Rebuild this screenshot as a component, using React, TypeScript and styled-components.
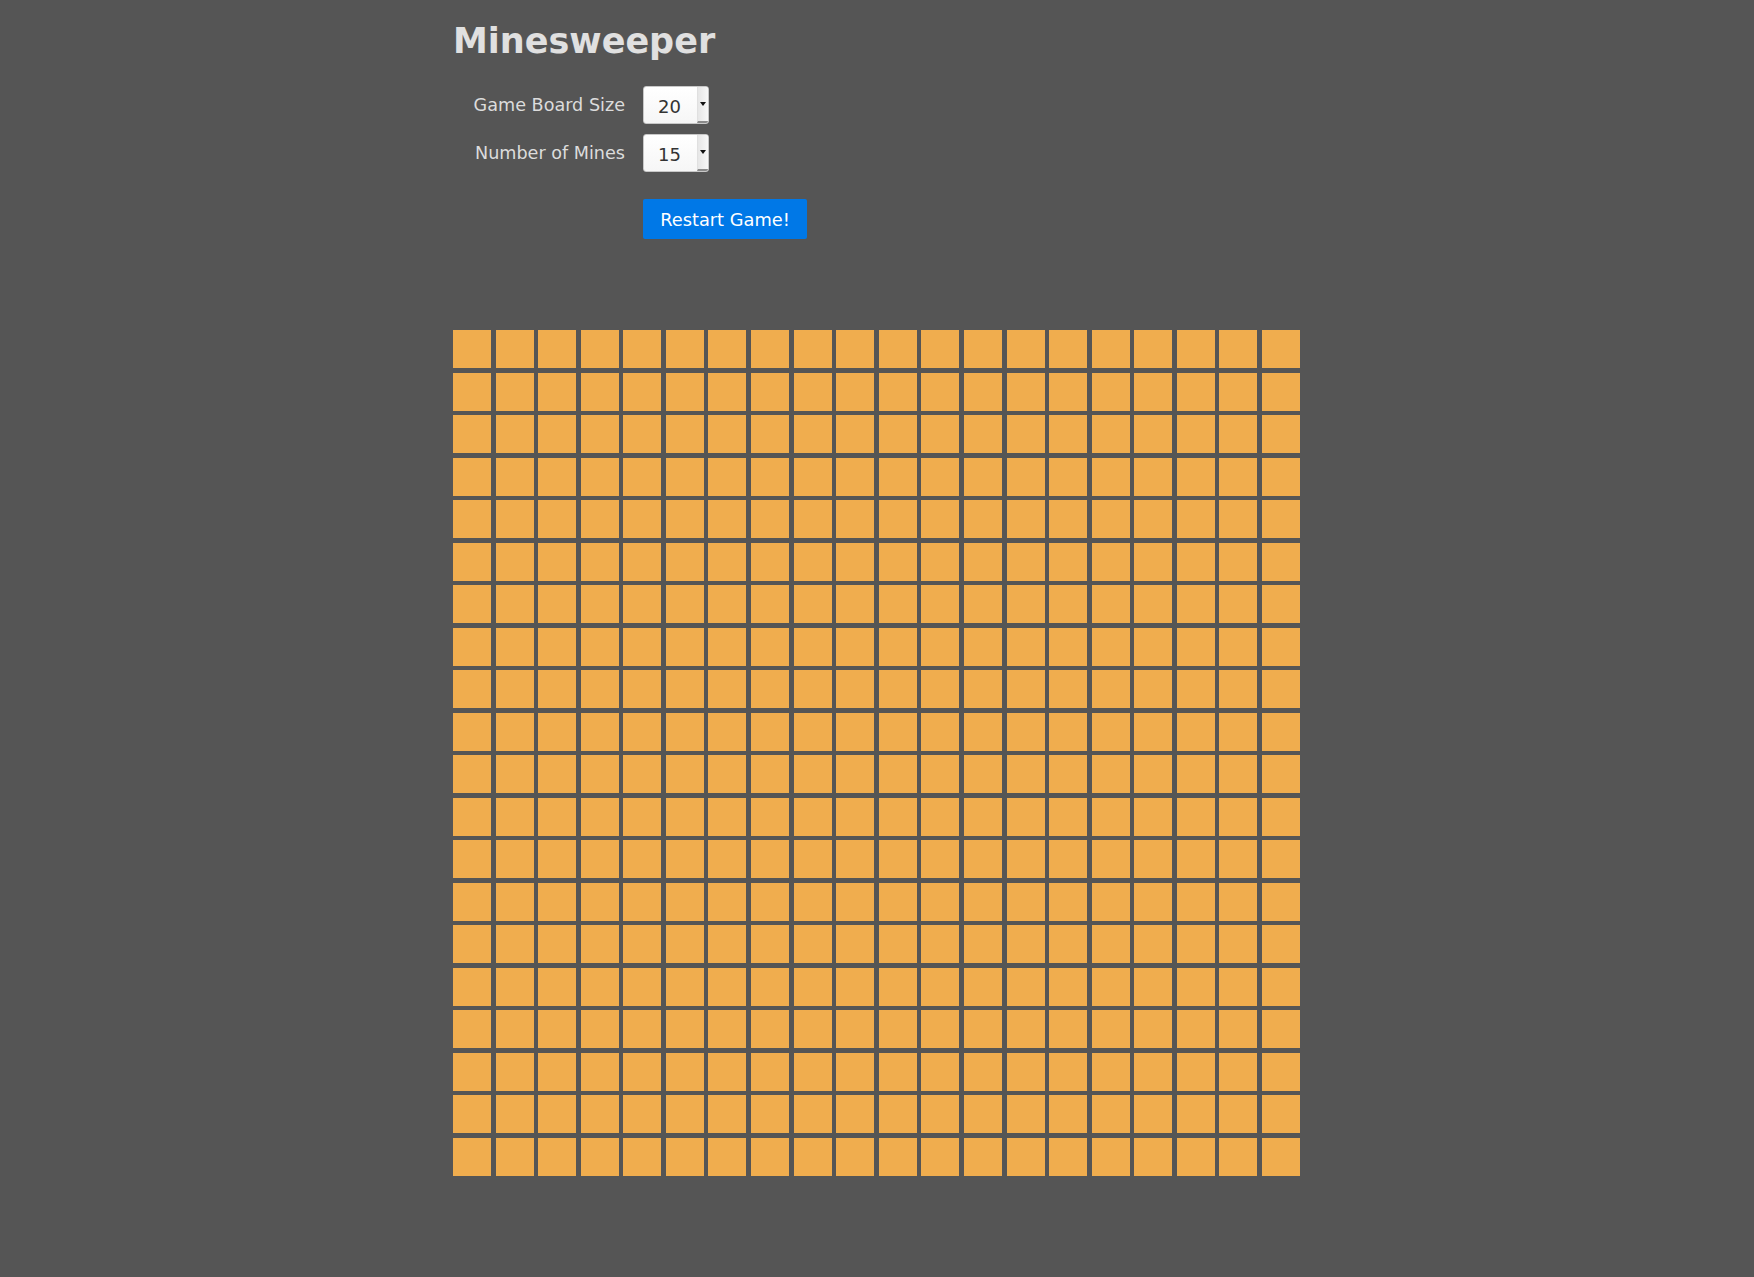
import React from "react";
import styled, { createGlobalStyle } from "styled-components";

const Global = createGlobalStyle`
  html, body { margin: 0; padding: 0; background: #555555; }
  body { font-family: "DejaVu Sans", sans-serif; color: #dddddd; }
`;

const Page = styled.div`
  width: 848px;
  margin: 0 auto;
  padding-top: 20px;
  padding-bottom: 100px;
`;

const Title = styled.h1`
  margin: 0;
  font-size: 35px;
  font-weight: bold;
  line-height: 42px;
  color: #e0e0e0;
`;

const Form = styled.form`
  display: flex;
  flex-direction: column;
  margin-top: 24px;
`;

const Row = styled.div`
  display: flex;
  align-items: center;
  height: 38px;
  margin-bottom: 9.5px;
`;

const Label = styled.label`
  width: 172px;
  margin-right: 18px;
  text-align: right;
  font-size: 17.6px;
  color: #dcdcdc;
`;

const SelectBox = styled.div`
  display: flex;
  width: 66px;
  height: 38px;
  box-sizing: border-box;
  border: 1px solid #c8c8c8;
  border-radius: 3px;
  background: linear-gradient(#ffffff, #f6f6f6);
  overflow: hidden;
`;

const Select = styled.select`
  appearance: none;
  -webkit-appearance: none;
  border: none;
  outline: none;
  background: transparent;
  flex: 1;
  min-width: 0;
  padding: 3px 0 0 14px;
  font-family: "DejaVu Sans", sans-serif;
  font-size: 18px;
  color: #333;
`;

const Arrow = styled.span`
  width: 11px;
  display: flex;
  align-items: center;
  justify-content: center;
  box-sizing: border-box;
  background: linear-gradient(90deg, #e6e6e6, #f8f8f8);
  border-left: 1px solid #e0e0e0;
  border-bottom: 2px solid #8a8a8a;
  &::after {
    content: "";
    border-left: 3px solid transparent;
    border-right: 3px solid transparent;
    border-top: 4px solid #111;
  }
`;

const Controls = styled.div`
  margin: 18px 0 0 190px;
`;

const Button = styled.button`
  width: 164px;
  height: 40px;
  border: none;
  border-radius: 2px;
  background: rgb(0, 120, 231);
  color: #ffffff;
  font-family: "DejaVu Sans", sans-serif;
  font-size: 17.8px;
  cursor: pointer;
  padding: 0;
`;

const Board = styled.div`
  margin-top: 91px;
  display: grid;
  grid-template-columns: repeat(20, 38px);
  grid-auto-rows: 38px;
  justify-content: space-between;
  align-content: space-between;
  width: 847px;
  height: 846px;
`;

const Cell = styled.div`
  background: #f0ad4e;
`;

const sizes = [5, 10, 15, 20, 25, 30];
const mines = [5, 10, 15, 20, 25, 30, 40, 50];

export default function App() {
  const cells = Array.from({ length: 400 }, (_, i) => i);
  return (
    <>
      <Global />
      <Page>
        <Title>Minesweeper</Title>
        <Form onSubmit={(e) => e.preventDefault()}>
          <Row>
            <Label htmlFor="size">Game Board Size</Label>
            <SelectBox>
              <Select id="size" defaultValue={20}>
                {sizes.map((s) => (
                  <option key={s} value={s}>{s}</option>
                ))}
              </Select>
              <Arrow />
            </SelectBox>
          </Row>
          <Row>
            <Label htmlFor="mines">Number of Mines</Label>
            <SelectBox>
              <Select id="mines" defaultValue={15}>
                {mines.map((s) => (
                  <option key={s} value={s}>{s}</option>
                ))}
              </Select>
              <Arrow />
            </SelectBox>
          </Row>
          <Controls>
            <Button type="submit">Restart Game!</Button>
          </Controls>
        </Form>
        <Board>
          {cells.map((i) => (
            <Cell key={i} />
          ))}
        </Board>
      </Page>
    </>
  );
}
